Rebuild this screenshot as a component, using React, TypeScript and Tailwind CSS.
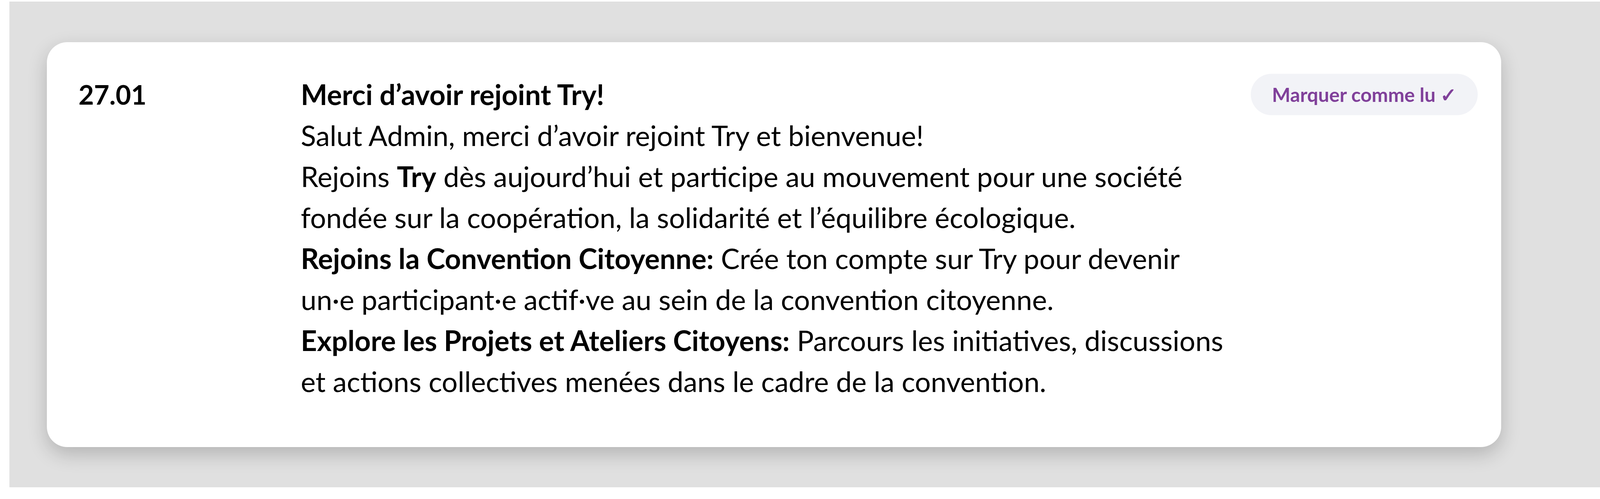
const notification = {
  date: "27.01",
  title: "Merci d’avoir rejoint Try!",
};

function MarkReadButton() {
  return (
    <button
      type="button"
      className="flex h-[106px] shrink-0 items-center rounded-full bg-[#f2f3f7] px-[54px] text-[50px] font-bold text-[#80409a] whitespace-nowrap"
    >
      Marquer comme lu ✓
    </button>
  );
}

function NotificationCard() {
  return (
    <div className="flex w-[3723px] items-start rounded-[52px] bg-white pt-[81px] pb-[116px] pl-[81px] pr-[60px] shadow-[0_18px_50px_rgba(0,0,0,0.2)]">
      <div className="w-[569px] shrink-0 text-[68px] leading-[105px] font-bold">{notification.date}</div>
      <div className="flex-1 text-[72px] leading-[105px] whitespace-nowrap">
        <p className="font-bold">{notification.title}</p>
        <p>Salut Admin, merci d’avoir rejoint Try et bienvenue!</p>
        <p>
          Rejoins <b>Try</b> dès aujourd’hui et participe au mouvement pour une société
          <br />
          fondée sur la coopération, la solidarité et l’équilibre écologique.
        </p>
        <p>
          <b>Rejoins la Convention Citoyenne:</b> Crée ton compte sur Try pour devenir
          <br />
          un·e participant·e actif·ve au sein de la convention citoyenne.
        </p>
        <p>
          <b>Explore les Projets et Ateliers Citoyens:</b> Parcours les initiatives, discussions
          <br />
          et actions collectives menées dans le cadre de la convention.
        </p>
      </div>
      <MarkReadButton />
    </div>
  );
}

export default function App() {
  return (
    <div className="h-[1278px] w-full bg-white pt-[4px] pl-[24px] text-black [font-family:Lato,sans-serif]">
      <div className="h-[1244px] bg-[#e0e0e0] pt-[104px] pl-[96px]">
        <NotificationCard />
      </div>
    </div>
  );
}
